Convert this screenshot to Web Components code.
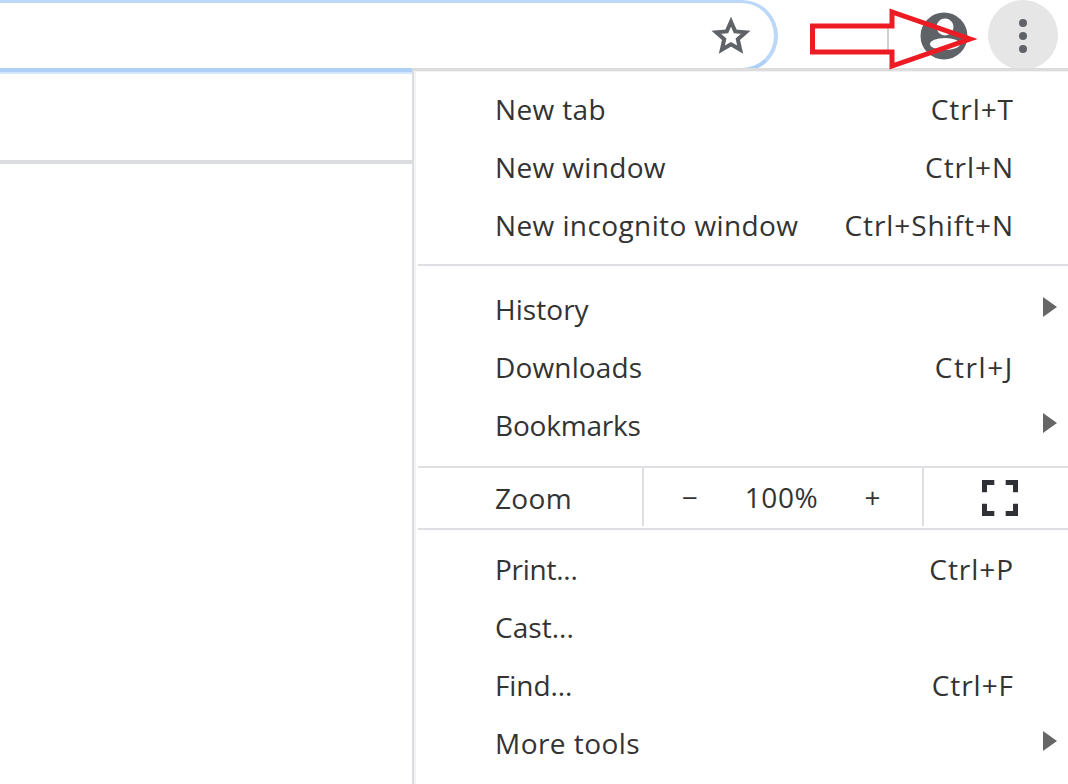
<!DOCTYPE html>
<html lang="en"><head><meta charset="utf-8"><title>Chrome menu</title>
<style>
html,body{margin:0;padding:0;background:#fff;width:1068px;height:784px;overflow:hidden}
body{font-family:"Open Sans","Noto Sans",sans-serif;color:#2b2b2b}
</style></head><body>
<browser-shot>
  <tool-bar slot="top"></tool-bar>
  <side-panel slot="side"></side-panel>
  <chrome-menu slot="menu">
    <menu-group>
      <menu-row key="Ctrl+T">New tab</menu-row>
      <menu-row key="Ctrl+N">New window</menu-row>
      <menu-row key="Ctrl+Shift+N" style="--ls:.4px">New incognito window</menu-row>
    </menu-group>
    <menu-group>
      <menu-row sub style="--ls:.05px">History</menu-row>
      <menu-row key="Ctrl+J" style="--ls:.15px;--kls:1.6px">Downloads</menu-row>
      <menu-row sub style="--ls:-.2px">Bookmarks</menu-row>
    </menu-group>
    <zoom-row></zoom-row>
    <menu-group>
      <menu-row key="Ctrl+P" style="--ls:-.25px">Print...</menu-row>
      <menu-row style="--ls:.05px">Cast...</menu-row>
      <menu-row key="Ctrl+F" style="--ls:-.1px">Find...</menu-row>
      <menu-row sub style="--ls:.45px">More tools</menu-row>
    </menu-group>
  </chrome-menu>
  <red-arrow slot="over"></red-arrow>
</browser-shot>
<script>
function def(name, css, html, init){
  customElements.define(name, class extends HTMLElement{
    constructor(){super();const s=this.attachShadow({mode:'open'});s.innerHTML='<style>'+css+'</style>'+html;}
    connectedCallback(){if(init)init(this,this.shadowRoot);}
  });
}
def('browser-shot',`
  :host{display:grid;grid-template-columns:412px 1fr;grid-template-rows:68px 1fr;width:1068px;height:784px;position:relative;overflow:hidden}
  .top{grid-column:1/3}
  ::slotted(chrome-menu){position:relative;z-index:3}
  ::slotted(red-arrow){position:absolute;left:808px;top:8px;z-index:5}
`,`<div class="top"><slot name="top"></slot></div><slot name="side"></slot><slot name="menu"></slot><slot name="over"></slot>`);
def('tool-bar',`
  :host{display:flex;height:68px;align-items:flex-start;background:#fff}
  .omni{width:818px;box-sizing:border-box;height:72px;margin-left:-40px;flex:none;border:4px solid #bcd8f8;border-top-width:3px;border-bottom-color:#aed0f6;border-radius:0 36px 36px 0;border-left:0;display:flex;align-items:flex-start;justify-content:flex-end;padding:11px 21px 0 0;position:relative;z-index:2}
  .rest{flex:1;display:flex;align-items:flex-start;padding-left:109px;position:relative}
  .sep{width:2px;height:24px;background:#d0d0d0;margin-top:28px;flex:none}
  .avatar{margin:12px 0 0 31px;flex:none;display:block}
  .more{width:70px;height:70px;border-radius:50%;background:#e6e6e6;display:flex;align-items:center;justify-content:center;flex:none;margin-left:20px}
  .more svg{margin-top:2px}
`,`
  <div class="omni"><svg width="44" height="44" viewBox="0 0 24 24"><path d="M12 4.200l2.300 5.300 5.700.5-4.300 3.800 1.300 5.600L12 16.500l-5 2.900 1.300-5.600L4 10l5.700-.5z" fill="none" stroke="#5f6368" stroke-width="2.200" stroke-linejoin="miter"/></svg></div>
  <div class="rest"><div class="sep"></div>
    <svg class="avatar" width="48" height="48" viewBox="0 0 48 48"><circle cx="24" cy="24" r="23.500" fill="#5f6368"/><circle cx="25" cy="15" r="8.500" fill="#fff"/><ellipse cx="25" cy="32" rx="15" ry="6" fill="#fff"/></svg>
    <div class="more"><svg width="12" height="36" viewBox="0 0 12 36"><circle cx="6" cy="5" r="4" fill="#5f6368"/><circle cx="6" cy="18" r="4" fill="#5f6368"/><circle cx="6" cy="31" r="4" fill="#5f6368"/></svg></div></div>
`);
def('side-panel',`
  :host{display:block;border-top:4px solid #aed0f6;box-shadow:inset 0 2px 0 #d6e6fa}
  .head{height:88px;border-bottom:4px solid #dbdcdf}
`,`<div class="head"></div>`);
def('chrome-menu',`
  :host{display:block;border-left:2px solid #dbdcdf;border-top:3px solid #dcdcdc;box-shadow:inset 2px 1px 0 #f3f3f3;padding:9px 0 0 4px;background:#fff}
`,`<slot></slot>`);
def('menu-group',`
  :host{display:block;padding-bottom:12px}
  :host(:first-child){padding-bottom:10px}
  :host(:not(:first-child)){padding-top:14px;border-top:2px solid #dedfe2}
  :host(:last-child){padding-top:10px}
`,`<slot></slot>`);
def('menu-row',`
  :host{display:flex;height:58px;align-items:center;justify-content:space-between;padding:0 54px 0 77px;font-size:28px;letter-spacing:var(--ls,.35px);color:#333;position:relative;white-space:nowrap}
  .tri{position:absolute;right:11px;top:17px;display:none}
  .key{letter-spacing:var(--kls,.95px)}
`,`<slot></slot><span class="key"></span><svg class="tri" width="14" height="20" viewBox="0 0 14 20"><path d="M0 0L14 10L0 20z" fill="#666"/></svg>`,
(el,s)=>{
  const k=el.getAttribute('key'); if(k) s.querySelector('.key').textContent=k;
  if(el.hasAttribute('sub')) s.querySelector('.tri').style.display='block';
});
def('zoom-row',`
  :host{display:grid;grid-template-columns:224px 282px 1fr;height:60px;border-top:2px solid #dedfe2;font-size:28px;letter-spacing:.35px;color:#333;align-items:stretch}
  .z{display:flex;align-items:center;padding-left:77px}
  .c{display:flex;align-items:center;justify-content:space-between;border-left:2px solid #dedfe2;border-right:2px solid #dedfe2;padding:0 41px 0 38px;box-sizing:border-box;margin-bottom:2px}
  .c span:nth-child(2){letter-spacing:.6px}
  .f{display:flex;align-items:center;padding-left:58px}
`,`<div class="z">Zoom</div><div class="c"><span>−</span><span>100%</span><span>+</span></div><div class="f"><svg width="36" height="36" viewBox="0 0 38 38"><path d="M2.500 13V2.500H13M25 2.500H35.500V13M2.500 25V35.500H13M35.500 25V35.500H25" fill="none" stroke="#2f3136" stroke-width="5.500"/></svg></div>`);
def('red-arrow',`:host{display:block;width:172px;height:64px}svg{display:block}`,
`<svg width="172" height="64" viewBox="0 0 172 64"><path d="M4.500 18H84V4L162 31L84 58V44H4.500z" fill="none" stroke="#ed1c24" stroke-width="5"/></svg>`);
</script>
</body></html>
